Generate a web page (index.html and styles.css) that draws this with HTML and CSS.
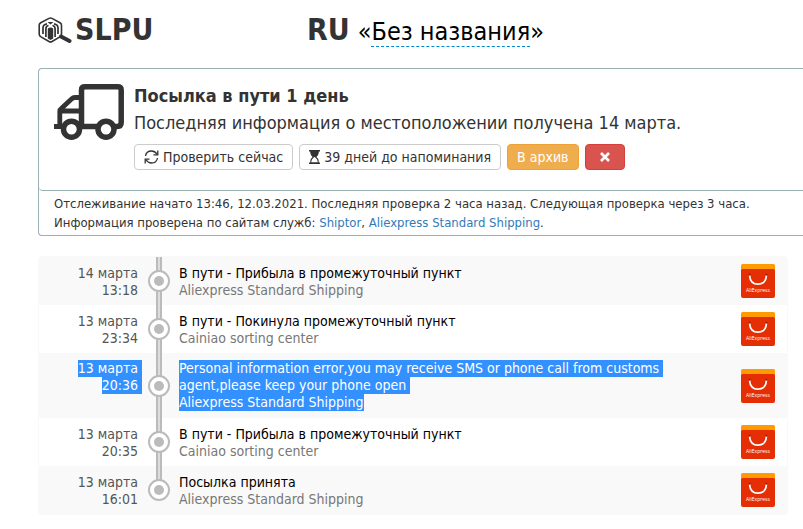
FILE: index.html
```html
<!DOCTYPE html>
<html lang="ru">

<head>
    <meta charset="UTF-8">
    <meta name="viewport" content="width=device-width, initial-scale=1.0">
    <title>SLPU RU</title>
    <link rel="stylesheet" href="styles.css">
</head>

<body>
    <svg class="symbols" aria-hidden="true">
        <symbol id="dot" viewBox="0 0 22 22">
            <circle cx="11" cy="11" r="10" fill="#fff" stroke="#bbb" stroke-width="2"/>
            <circle cx="11" cy="11" r="5" fill="#bbb"/>
        </symbol>
        <symbol id="aliexpress" viewBox="0 0 34 34">
            <rect width="34" height="10" rx="1.5" fill="#ff9a00"/>
            <path d="M0 6.5Q0 5 1.5 5h31Q34 5 34 6.5V32a2 2 0 0 1-2 2H2a2 2 0 0 1-2-2z" fill="#e62e04"/>
            <path d="M8.600 11.500c.4 5.500 3.700 8.700 8.400 8.700s8-3.200 8.400-8.700" fill="none" stroke="#fff" stroke-width="1.700" stroke-linecap="round"/>
            <circle cx="8.600" cy="10.700" r="1.100" fill="#a82003"/>
            <circle cx="25.400" cy="10.700" r="1.100" fill="#a82003"/>
            <text x="17" y="28" text-anchor="middle" class="logo-text">AliExpress</text>
        </symbol>
    </svg>

    <div class="container">
        <h1 class="track">
            <svg class="track-icon" viewBox="0 0 34 28" fill="none" stroke="#333" aria-hidden="true">
                <path d="M11 1.400q1.500-.8 3 0l8 4.300q1.500.8 1.500 2.600v9q0 1.800-1.500 2.600l-8 4.600q-1.500.8-3 0l-8-4.600Q1.200 19 1.200 17.300v-9q0-1.800 1.500-2.600z" stroke-width="1.600"/>
                <path d="M9 6.800Q4.800 7.500 5 11v6" stroke-width="1.700"/>
                <path d="M16 6.800q4.200.7 4 4.200v6" stroke-width="1.700"/>
                <path d="M10.500 8.500Q7.800 9 7.900 12v8M14.500 8.500q2.700.5 2.600 3.500v8" stroke-width="1.700"/>
                <path d="M9.800 11.500q2.700-2 5.400 0v10l-2.700 1.500-2.700-1.500z" fill="#333" stroke="none"/>
                <path d="M9.500 5h6l-3 2.500z" fill="#333" stroke="none"/>
                <path d="M23 19.500l8.500 4.500" stroke-width="4" stroke-linecap="round"/>
            </svg>
            <span class="track-code">SLPU</span>
            <span class="track-country">RU</span>
            <span class="track-name">«<a href="#">Без названия</a>»</span>
        </h1>

        <div class="panel">
            <div class="status">
                <svg class="truck" viewBox="0 0 70 56" fill="none" stroke="#333" stroke-width="5.500" aria-hidden="true">
                    <path d="M27.500 43V6q0-3.200 3.500-3.200h32.500Q67.200 2.800 67.200 6v32.500q0 4-4.200 4H61M27 42.500h16"/>
                    <path d="M27 13.500h-6q-2 0-3.500 1.500L7.300 24.500q-1.500 1-1.500 3v15H0h8M6 27h21" stroke-width="4.800"/>
                    <circle cx="17.500" cy="45.200" r="8"/>
                    <circle cx="52" cy="45.200" r="8"/>
                </svg>
                <div class="status-body">
                    <p class="status-title">Посылка в пути 1 день</p>
                    <p class="status-text">Последняя информация о местоположении получена 14 марта.</p>
                    <div class="buttons">
                        <button class="btn">
                            <svg class="icon-refresh" viewBox="0 0 15 14" fill="none" stroke="#333" stroke-width="1.300" aria-hidden="true">
                                <path d="M1.500 6C2 3 4.500 1 7.500 1c2.200 0 4 1 5.300 2.800M13.800.5v4.300H9.500"/>
                                <path d="M13.500 8c-.5 3-3 5-6 5-2.200 0-4-1-5.300-2.800M1.200 13.500V9.200h4.300"/>
                            </svg>
                            Проверить сейчас
                        </button>
                        <button class="btn">
                            <svg class="icon-hourglass" viewBox="0 0 11 14" fill="none" stroke="#333" aria-hidden="true">
                                <path d="M0 .8h11M0 13.200h11" stroke-width="1.600"/>
                                <path d="M1.800 1h7.400v1.500c0 2-1 3.300-2.600 4.500 1.600 1.200 2.600 2.500 2.600 4.500V13H1.800v-1.500c0-2 1-3.300 2.600-4.500C2.800 5.800 1.800 4.500 1.800 2.500z" stroke-width="1.100"/>
                                <path d="M1.800 1h7.400v1.500c0 2-1 3.300-2.600 4.500H4.400C2.800 5.800 1.800 4.500 1.800 2.500z" fill="#333" stroke="none"/>
                            </svg>
                            39 дней до напоминания
                        </button>
                        <button class="btn btn-warning">В архив</button>
                        <button class="btn btn-danger" aria-label="Удалить">
                            <svg class="icon-remove" viewBox="0 0 10 10" stroke="#fff" stroke-width="2.600" aria-hidden="true">
                                <path d="M1 1l8 8M9 1l-8 8"/>
                            </svg>
                        </button>
                    </div>
                </div>
            </div>
            <div class="info">
                <p>Отслеживание начато 13:46, 12.03.2021. Последняя проверка 2 часа назад. Следующая проверка через 3 часа.</p>
                <p>Информация проверена по сайтам служб: <a href="#">Shiptor</a>, <a href="#">Aliexpress Standard Shipping</a>.</p>
            </div>
        </div>

        <table class="history">
            <tr>
                <td class="date">14 марта<br>13:18</td>
                <td class="line"><svg><use href="#dot"/></svg></td>
                <td class="event">В пути - Прибыла в промежуточный пункт<br><span class="service">Aliexpress Standard Shipping</span></td>
                <td class="logo"><svg><use href="#aliexpress"/></svg></td>
            </tr>
            <tr>
                <td class="date">13 марта<br>23:34</td>
                <td class="line"><svg><use href="#dot"/></svg></td>
                <td class="event">В пути - Покинула промежуточный пункт<br><span class="service">Cainiao sorting center</span></td>
                <td class="logo"><svg><use href="#aliexpress"/></svg></td>
            </tr>
            <tr class="selected">
                <td class="date"><mark>13 марта</mark><mark>20:36</mark></td>
                <td class="line"><svg><use href="#dot"/></svg></td>
                <td class="event"><mark>Personal information error,you may receive SMS or phone call from customs</mark><mark>agent,please keep your phone open</mark><mark class="last">Aliexpress Standard Shipping</mark></td>
                <td class="logo"><svg><use href="#aliexpress"/></svg></td>
            </tr>
            <tr>
                <td class="date">13 марта<br>20:35</td>
                <td class="line"><svg><use href="#dot"/></svg></td>
                <td class="event">В пути - Прибыла в промежуточный пункт<br><span class="service">Cainiao sorting center</span></td>
                <td class="logo"><svg><use href="#aliexpress"/></svg></td>
            </tr>
            <tr>
                <td class="date">13 марта<br>16:01</td>
                <td class="line"><svg><use href="#dot"/></svg></td>
                <td class="event">Посылка принята<br><span class="service">Aliexpress Standard Shipping</span></td>
                <td class="logo"><svg><use href="#aliexpress"/></svg></td>
            </tr>
        </table>
    </div>
</body>

</html>
```
FILE: styles.css
```css
* {
    box-sizing: border-box;
}

body {
    font-family: Tahoma, "DejaVu Sans Condensed", sans-serif;
    font-size: 14px;
    line-height: 17px;
    color: #333;
    background-color: #fff;
    margin: 0;
}

p {
    margin: 0;
}

a {
    color: #337ab7;
    text-decoration: none;
}

.symbols {
    display: none;
}

.container {
    padding: 12px 15px 14px 38px;
}

.track {
    display: flex;
    align-items: baseline;
    margin: 0 0 18px;
    font-size: 30px;
    line-height: 36px;
}

.track-icon {
    width: 34px;
    height: 28px;
    margin-right: 3px;
    align-self: center;
}

.track-code {
    width: 232px;
}

.track-name {
    margin-left: 8px;
    font-size: 25px;
    font-weight: normal;
    color: #000;
}

.track-name a {
    color: #000;
    border-bottom: 1px dashed #08c;
}

/* the panel runs up to the edge of the window */
.panel {
    margin-right: -15px;
    border: 1px solid #9bb0b5;
    border-right: none;
    border-radius: 4px 0 0 4px;
}

.status {
    display: flex;
    gap: 10px;
    padding: 15px 15px 20px;
    border-bottom: 1px solid #9bb0b5;
    border-radius: 0 0 0 4px;
}

.truck {
    flex: none;
    width: 70px;
    height: 56px;
}

.status-title {
    font-size: 18px;
    font-weight: bold;
    line-height: 24px;
}

.status-text {
    font-size: 18px;
    line-height: 30px;
}

.buttons {
    display: flex;
    gap: 6px;
    margin-top: 6px;
}

.btn {
    display: flex;
    align-items: center;
    gap: 4px;
    height: 26px;
    padding: 0 9px;
    font: inherit;
    color: #333;
    background-color: #fff;
    border: 1px solid #ccc;
    border-radius: 4px;
    cursor: pointer;
}

.btn-warning {
    color: #fff;
    background-color: #f0ad4e;
    border-color: #eea236;
}

.btn-danger {
    padding: 0 14px;
    background-color: #d9534f;
    border-color: #d43f3a;
}

.icon-refresh {
    width: 15px;
    height: 14px;
}

.icon-hourglass {
    width: 11px;
    height: 14px;
}

.icon-remove {
    width: 10px;
    height: 10px;
}

.info {
    padding: 3px 15px;
    font-size: 13px;
    line-height: 19px;
}

.history {
    width: 100%;
    margin-top: 20px;
    border: 1px solid #f9f9f9;
    border-radius: 4px;
    border-spacing: 0;
}

.history tr:nth-child(odd) {
    background-color: #f9f9f9;
}

.history td {
    padding: 7px 0;
}

.history .date {
    width: 104px;
    padding: 8px 5px 6px 0;
    vertical-align: top;
    text-align: right;
    color: #555;
}

.history .line {
    width: 32px;
    padding: 0 5px;
    background: linear-gradient(90deg, #bbb 2px, #ddd 2px, #ddd 4px, #bbb 4px) center top / 6px 100% no-repeat;
}

.history tr:last-child .line {
    background-size: 6px 50%;
}

.line svg {
    display: block;
    width: 22px;
    height: 22px;
}

.history .event {
    padding: 8px 0 6px 4px;
    color: #000;
}

.service {
    color: #777;
}

.history .logo {
    width: 46px;
}

.logo svg {
    display: block;
    width: 34px;
    height: 34px;
}

.logo-text {
    font-family: "Open Sans", sans-serif;
    font-size: 5px;
    fill: #fff;
}

mark {
    display: block;
    width: fit-content;
    padding-right: 4px;
    color: #fff;
    background-color: #3390ff;
}

.date mark {
    margin-left: auto;
}

.history .selected .date {
    padding: 7px 1px 7px 0;
}

.history .selected .event {
    padding: 7px 0 7px 4px;
}

mark.last {
    padding-right: 0;
}
```
